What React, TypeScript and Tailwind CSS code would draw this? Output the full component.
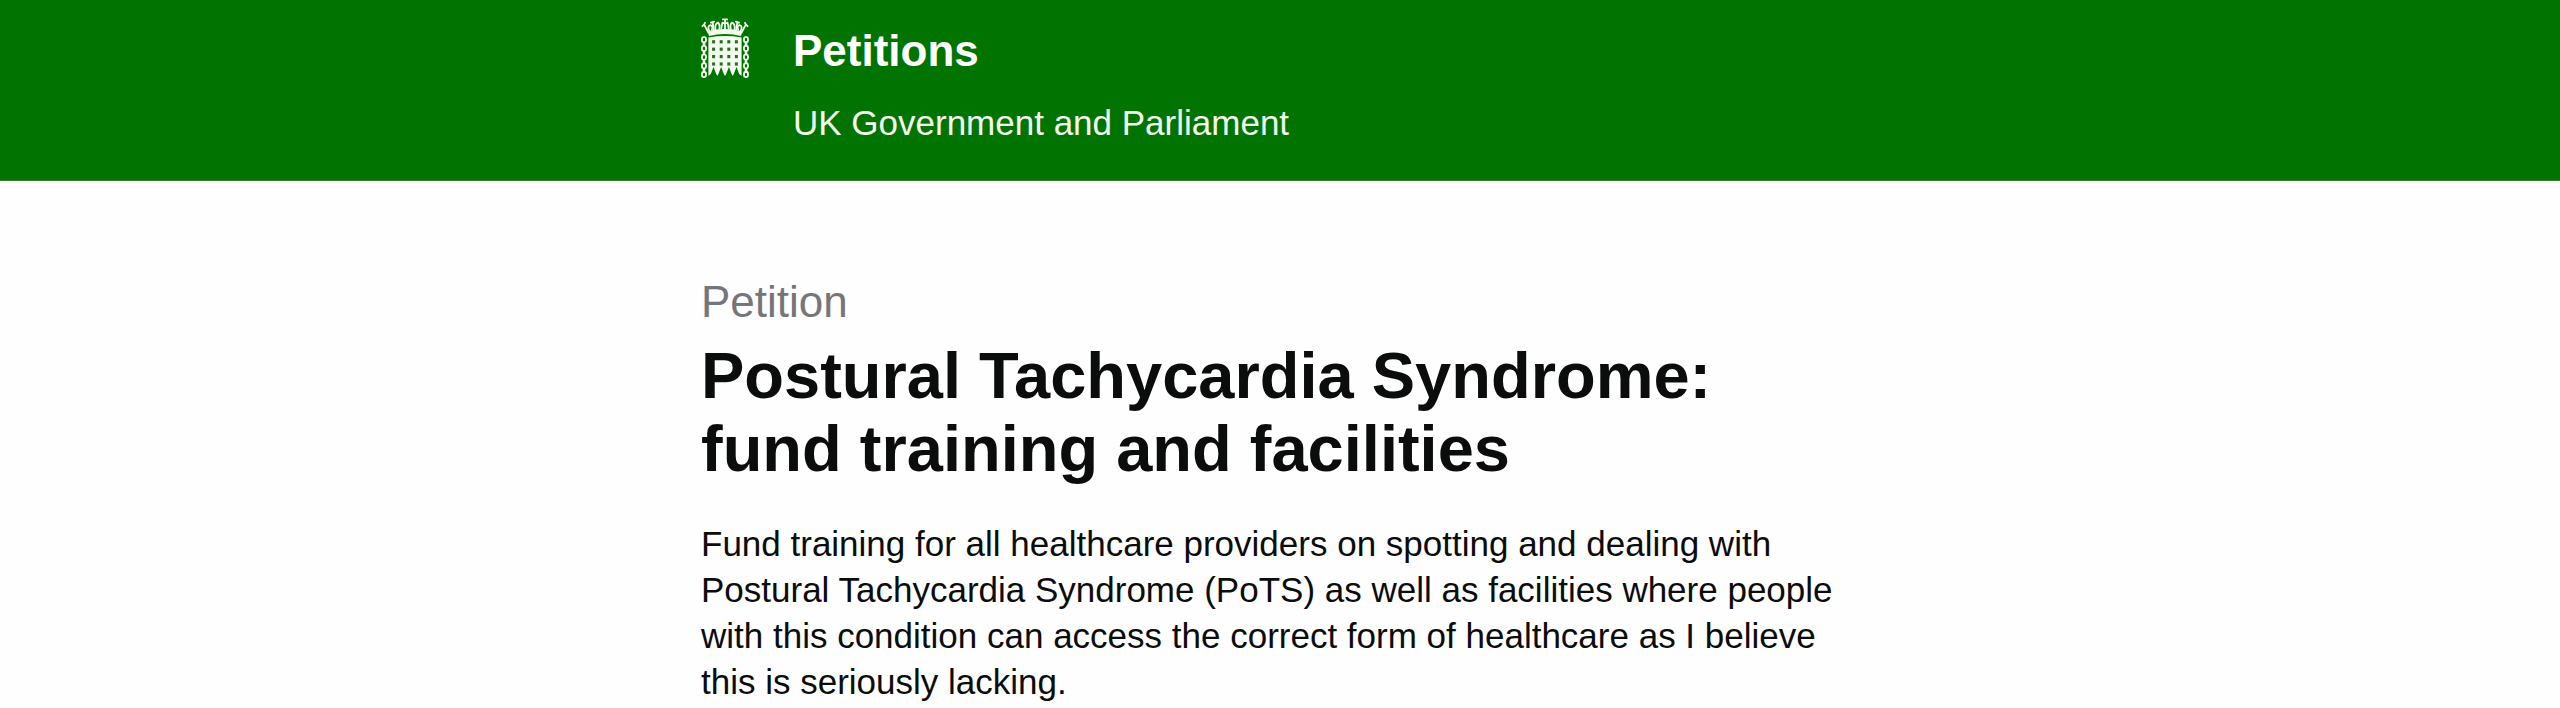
const chainLinks = [0, 1, 2, 3, 4];
const barColumns = [0, 1, 2, 3];
const barRows = [0, 1, 2, 3];

function Chain({ x }: { x: number }) {
  return (
    <g>
      {chainLinks.map((i) => (
        <rect key={i} x={x - 2} y={19.2 + i * 8.7} width={4} height={5} rx={1.5} fill="none" stroke="currentColor" strokeWidth={1.8} />
      ))}
      {chainLinks.slice(1).map((i) => (
        <path key={i} d={`M${x} ${15 + i * 8.7}v4.6`} stroke="currentColor" strokeWidth={2.6} />
      ))}
    </g>
  );
}

function Portcullis() {
  return (
    <svg viewBox="0 0 48 60" className="mt-[18px] h-[60px] w-12 shrink-0 text-[#f2fbee]" role="img" aria-label="Portcullis">
      <path d="M8 18 6.6 13.2Q24 8.8 41.4 13.2L40 18Q24 14 8 18Z" fill="currentColor" />
      <g fill="none" stroke="currentColor" strokeWidth={1.8} strokeLinecap="round">
        <path d="M7.4 14.5 3.2 6.6M1.4 8.2l1.8-1.8.8-1.6M40.6 14.5l4.2-7.9M46.6 8.2l-1.8-1.8-.8-1.6" />
        <path d="M8.6 13.4Q5.8 8.4 9.4 7.2q3 .6 1.4 4.6M39.4 13.4q2.8-5 -.8-6.2-3 .6-1.4 4.6" />
        <path d="M12.8 12.4 11.6 4.2M9.8 4.6l3.4-.9M35.2 12.4l1.2-8.2M38.2 4.6l-3.4-.9" />
        <path d="M14.4 11.6Q13.6 6 17 4.6q2.4 2 1.2 6.4M33.6 11.6q.8-5.6-2.6-7-2.4 2-1.2 6.4" />
        <path d="M24 11V2.2M21.8 1.4h4.4M20.2 11l1.2-6.4M27.8 11l-1.2-6.4M21.6 5.2h4.8" />
      </g>
      <path d="M7.4 19.4Q24 16.6 40.6 19.4V58l-2.4-2-2.7-7-2.7 7-1.1 2-1.1-2-2.7-7-2.7 7-1.2 2-1.2-2-2.7-7-2.7 7-1.1 2-1.1-2-2.7-7-2.7 7-2.4 2Z" fill="currentColor" />
      {barRows.map((r) =>
        barColumns.map((c) => (
          <rect key={`${r}-${c}`} x={11.1 + c * 7.6} y={22.2 + r * 7.4} width={3} height={3.2} fill="#2f6b24" />
        )),
      )}
      <Chain x={3} />
      <Chain x={45} />
    </svg>
  );
}

export default function App() {
  return (
    <div className="min-h-screen bg-[#fefefe] font-['Liberation_Sans',Arial,sans-serif] text-[#0b0c0c]">
      <header className="border-b border-[#3f7a36] bg-[#007300] text-white">
        <div className="mx-auto flex max-w-[1158px] gap-11 pb-9">
          <Portcullis />
          <div className="pt-6">
            <a href="#petitions" className="block text-[44px] leading-[54px] font-bold">Petitions</a>
            <p className="mt-6 text-[35px] leading-[42px] text-[#f2fbee]">UK Government and Parliament</p>
          </div>
        </div>
      </header>
      <main className="mx-auto max-w-[1158px] pt-[94px]">
        <h1>
          <span className="block text-[44px] leading-[54px] text-[#76757a]">Petition</span>
          <span className="mt-2.5 block max-w-[1060px] text-[65px] leading-[73px] font-bold">Postural Tachycardia Syndrome: fund training and facilities</span>
        </h1>
        <p className="mt-9 text-[35px] leading-[46px]">
          Fund training for all healthcare providers on spotting and dealing with Postural Tachycardia Syndrome (PoTS) as well as facilities where people with this condition can access the correct form of healthcare as I believe this is seriously lacking.
        </p>
      </main>
    </div>
  );
}
